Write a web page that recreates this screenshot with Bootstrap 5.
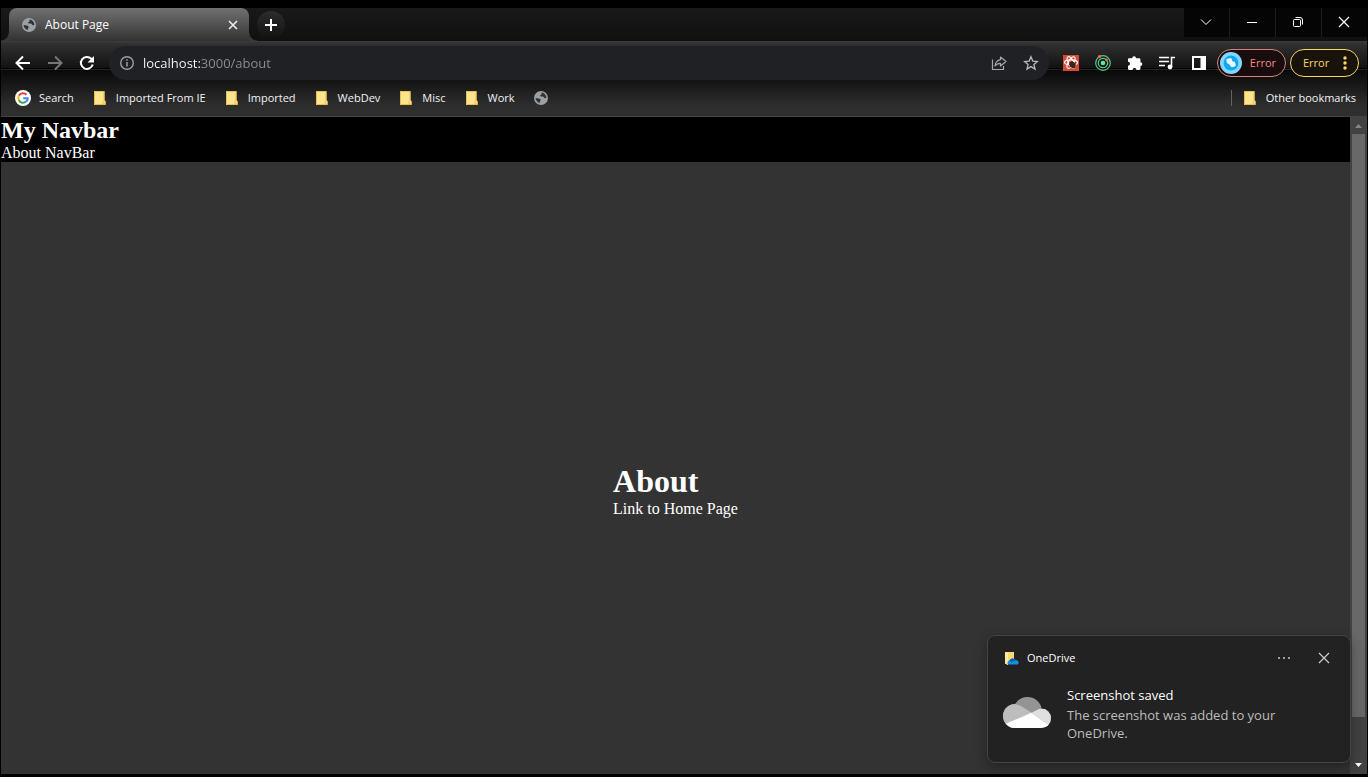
<!DOCTYPE html>
<html lang="en">
<head>
<meta charset="utf-8">
<meta name="viewport" content="width=device-width, initial-scale=1">
<title>About Page</title>
<link href="https://cdn.jsdelivr.net/npm/bootstrap@5.3.0/dist/css/bootstrap.min.css" rel="stylesheet">
<style>
  body { background: #000; color: #fff; font: 12px/16px "Open Sans", "Noto Sans", sans-serif; }
  svg { display: block; flex: none; }
  button, .pill { border: 0; background: none; color: inherit; padding: 0; }
  a { color: inherit; text-decoration: none; }
  .window { padding: 8px 1px 3px; }

  .tab-strip { background: linear-gradient(#191919, #101010); height: 33px; }
  .page-tab { width: 240px; height: 33px; margin-left: 8px; padding: 0 10px 0 12px; border-radius: 8px 8px 0 0; background: linear-gradient(#717171, #323232); position: relative; }
  .page-tab::before, .page-tab::after { content: ""; position: absolute; bottom: 0; width: 8px; height: 8px; }
  .page-tab::before { right: 100%; background: radial-gradient(circle at 0 0, transparent 7px, #3a3a3a 8px); }
  .page-tab::after { left: 100%; background: radial-gradient(circle at 100% 0, transparent 7px, #3a3a3a 8px); }
  .tab-add { width: 28px; height: 28px; border-radius: 50%; background: linear-gradient(#2c2c2c, #121212); margin: 3px 0 0 8px; }
  .win-btn { width: 45px; height: 29px; padding: 0 2px 1px 0; background: #050505; }
  .win-controls { gap: 1px; background: #1d1d1d; height: 29px; }

  .chrome-bars { background: linear-gradient(#3c3c3c 0, #303030 3px, #121212 27px, #000 27px, #000 28px, #252525 28px, #252525 29px, #090909 29px, #2d2d2d 64px, #2f2f2f 100%); border-bottom: 1px solid #444; }
  .tool-row { height: 44px; padding: 0 8px 0 6px; }
  .tool-btn { width: 32px; height: 32px; }
  .omnibox { height: 34px; margin: 0 6px; padding: 0 2px 0 10px; border-radius: 17px; background: #202124; }
  .address { font-size: 13px; line-height: 20px; border: 0; outline: 0; padding: 0; min-width: 0; color: transparent; background: linear-gradient(90deg, #fff 57px, #8c8f93 57px); -webkit-background-clip: text; background-clip: text; }
  .pill { height: 28px; width: 69px; border: 1px solid; border-radius: 14px; padding: 0 9px 0 2px; font-size: 11px; }
  .pill-red { color: #f28b82; border-color: #d9827c; background: #180c0d; margin-left: 2px; }
  .pill-yellow { color: #fdd663; background: #17130a; margin-left: 4px; padding-left: 12px; }
  .bookmarks { height: 31px; padding: 0 11px 5px 14px; gap: 18px; color: #f1f3f4; font-size: 11px; }
  .bookmark { gap: 8px; }
  .divider { width: 1px; height: 16px; background: #626262; margin-right: -8px; }

  .viewport { background: #333; min-height: 0; font: 16px/18px "Liberation Serif", "Times New Roman", serif; }
  .site { overflow: hidden; }
  .site-head { background: #000; }
  .site-head h1 { font-size: 24px; line-height: 27px; font-weight: 700; }
  .site-main { height: 100%; }
  .site-main h1 { font-size: 32px; line-height: 37px; font-weight: 700; }
  .scroll-rail { width: 17px; background: #424242; }
  .rail-arrow { width: 17px; height: 17px; }
  .rail-thumb { width: 13px; flex: 583 0 0; background: #686868; }
  .rail-rest { flex: 40 0 0; }

  .notice { position: absolute; right: 16px; bottom: 11px; width: 364px; height: 128px; padding: 14px 18px 0 15px; border: 1px solid #444; border-radius: 8px; background: #222; box-shadow: 0 4px 12px rgba(0,0,0,.35); font: 11px/16px "Open Sans", "Noto Sans", sans-serif; }
  .notice-body { gap: 16px; margin-top: 19px; }
  .notice-text { font-size: 13px; line-height: 18px; color: #bdbdbd; }
  .notice-text strong { font-weight: 400; color: #fff; line-height: 21px; }
</style>
</head>
<body>
<svg width="0" height="0" class="position-absolute" aria-hidden="true">
  <symbol id="globe" viewBox="0 0 16 16"><circle cx="8" cy="8" r="7" fill="#9aa0a6"/><path d="M8.500 2.500c2.800.3 4.700 2.400 4.900 5-.6.700-1.300.8-1.900.4-.7-.4-.9-1.300-1.700-1.400-.9-.1-1.700.3-2.400-.3-.6-.6-.1-1.200.6-1.400.9-.2.900-.9.500-1.300zM2.600 8l3 .4c1.100.2 1.800.6 2.100 1.300.3.800-.6.900-.7 1.700-.1.600-.1 1.100-.4 1.500-2.300-.6-3.900-2.500-4-4.900z" fill="#303134"/></symbol>
  <symbol id="folder" viewBox="0 0 16 16"><path d="M2 1h10.500v9.300l1 .7v4H2z" fill="#ffe48f"/><path d="M2.500 1.500H12v9l1.200.8v3.200H2.500zM11 14.500v-3l1-1" fill="none" stroke="#e9bf48"/></symbol>
</svg>
<div class="window vh-100 d-flex flex-column overflow-hidden">
  <div class="tab-strip d-flex">
    <div class="page-tab d-flex align-items-center">
      <svg width="16" height="16"><use href="#globe"/></svg>
      <span class="ms-2 flex-fill">About Page</span>
      <button type="button" aria-label="Close tab"><svg width="12" height="12" viewBox="0 0 12 12"><path d="M2 2l8 8M10 2l-8 8" stroke="#eee" stroke-width="1.600"/></svg></button>
    </div>
    <button type="button" class="tab-add d-flex align-items-center justify-content-center" aria-label="New tab"><svg width="14" height="14" viewBox="0 0 14 14"><path d="M7 1v12M1 7h12" stroke="#fff" stroke-width="2"/></svg></button>
    <div class="win-controls d-flex ms-auto">
      <button type="button" class="win-btn d-flex align-items-center justify-content-center" aria-label="Search tabs"><svg width="12" height="12" viewBox="0 0 12 12"><path d="M1 3.500l5 5 5-5" fill="none" stroke="#fff"/></svg></button>
      <button type="button" class="win-btn d-flex align-items-center justify-content-center" aria-label="Minimize"><svg width="12" height="12" viewBox="0 0 12 12"><path d="M1 6.500h10" stroke="#fff"/></svg></button>
      <button type="button" class="win-btn d-flex align-items-center justify-content-center" aria-label="Restore"><svg width="12" height="12" viewBox="0 0 12 12"><rect x="1.500" y="3.500" width="7" height="7" rx="1" fill="none" stroke="#fff"/><path d="M3.500 1.500H8a2.500 2.500 0 0 1 2.500 2.500v4.500" fill="none" stroke="#fff"/></svg></button>
      <button type="button" class="win-btn d-flex align-items-center justify-content-center" aria-label="Close window"><svg width="12" height="12" viewBox="0 0 12 12"><path d="M1 1l10 10M11 1L1 11" stroke="#fff" stroke-width="1.200"/></svg></button>
    </div>
  </div>

  <div class="chrome-bars">
    <div class="tool-row d-flex align-items-center">
      <button type="button" class="tool-btn d-flex align-items-center justify-content-center" aria-label="Back"><svg width="16" height="16" viewBox="0 0 16 16"><path d="M15 8H2.500M8 1.500L1.500 8 8 14.500" fill="none" stroke="#fff" stroke-width="2"/></svg></button>
      <button type="button" class="tool-btn d-flex align-items-center justify-content-center" aria-label="Forward"><svg width="16" height="16" viewBox="0 0 16 16"><path d="M1 8h12.500M8 1.500L14.500 8 8 14.500" fill="none" stroke="#777" stroke-width="2"/></svg></button>
      <button type="button" class="tool-btn d-flex align-items-center justify-content-center" aria-label="Reload"><svg width="16" height="16" viewBox="0 0 16 16"><path d="M13.700 9.500A6 6 0 1 1 12.300 3.800L13.500 5" fill="none" stroke="#fff" stroke-width="2"/><path d="M15 1v6.500H8.500z" fill="#fff"/></svg></button>
      <div class="omnibox d-flex align-items-center flex-fill">
        <svg width="16" height="16" viewBox="0 0 16 16"><circle cx="8" cy="8" r="6.300" fill="none" stroke="#9aa0a6" stroke-width="1.400"/><path d="M8 7v4.500M8 4.300v1.500" stroke="#9aa0a6" stroke-width="1.500"/></svg>
        <input class="address flex-fill ms-2" type="text" aria-label="Address" value="localhost:3000/about">
        <button type="button" class="tool-btn d-flex align-items-center justify-content-center" aria-label="Share"><svg width="16" height="16" viewBox="0 0 16 16"><path d="M1.500 4.500v10h11V11" fill="none" stroke="#a5a8ab" stroke-width="1.200"/><path d="M9.500 2l5.500 4.500-5.500 4.500V8.300C7 8.300 5.300 9.200 4 11c.4-3.500 2-5.800 5.500-6.400z" fill="none" stroke="#a5a8ab" stroke-width="1.200" stroke-linejoin="round"/></svg></button>
        <button type="button" class="tool-btn d-flex align-items-center justify-content-center" aria-label="Bookmark this page"><svg width="16" height="16" viewBox="0 0 16 16"><path d="M8 1.800l1.800 4.300 4.700.4-3.600 3 1.100 4.600L8 11.600l-4 2.500 1.100-4.600-3.600-3 4.700-.4z" fill="none" stroke="#b6b9bc" stroke-width="1.300"/></svg></button>
      </div>
      <button type="button" class="tool-btn d-flex align-items-center justify-content-center" aria-label="React developer tools"><svg width="16" height="16" viewBox="0 0 16 16"><path fill="#d64937" d="M0 0h16v16H0z"/><g fill="none" stroke="#fff" stroke-width="1.100"><ellipse cx="8" cy="7.500" rx="6.500" ry="2.600"/><ellipse cx="8" cy="7.500" rx="6.500" ry="2.600" transform="rotate(60 8 7.500)"/><ellipse cx="8" cy="7.500" rx="6.500" ry="2.600" transform="rotate(120 8 7.500)"/></g><ellipse cx="9.500" cy="10" rx="2.600" ry="3.800" transform="rotate(-35 9.500 10)" fill="#40201c"/><path d="M6 9l6 4M9 6.500l4 3M6.500 12.500l6-5" stroke="#40201c"/></svg></button>
      <button type="button" class="tool-btn d-flex align-items-center justify-content-center" aria-label="Orbit extension"><svg width="16" height="16" viewBox="0 0 16 16"><g fill="none" stroke="#4fc990" stroke-width="1.200"><circle cx="8" cy="8" r="7.300"/><circle cx="8" cy="8" r="4.700"/></g><circle cx="8" cy="8" r="2.300" fill="#64e5a5"/><circle cx="4.500" cy="1.700" r="1.600" fill="#f46a2a"/><circle cx="11.500" cy="5" r="1.400" fill="#f46a2a"/></svg></button>
      <button type="button" class="tool-btn d-flex align-items-center justify-content-center" aria-label="Extensions"><svg width="16" height="16" viewBox="0 0 16 16"><path d="M5.200 3.200a1.900 1.900 0 0 1 3.800 0h3.200c.7 0 1.200.5 1.200 1.200v2.800a1.900 1.900 0 0 1 0 3.800v2.800c0 .7-.5 1.200-1.200 1.200H9.500a2 2 0 0 0-4 0H2.200c-.7 0-1.200-.5-1.200-1.200v-3a2 2 0 0 0 0-4V4.400c0-.7.500-1.200 1.200-1.200z" fill="#fff"/></svg></button>
      <button type="button" class="tool-btn d-flex align-items-center justify-content-center" aria-label="Media controls"><svg width="16" height="16" viewBox="0 0 16 16"><path d="M0 2.500h10M0 6.500h10M0 10.500h6M12.500 12V2.500H16" fill="none" stroke="#fff" stroke-width="1.600"/><circle cx="11" cy="12" r="2.400" fill="#fff"/></svg></button>
      <button type="button" class="tool-btn d-flex align-items-center justify-content-center" aria-label="Side panel"><svg width="16" height="16" viewBox="0 0 16 16"><path d="M1 1h14v14H1zM3 3v10h6.500V3z" fill="#fff" fill-rule="evenodd"/></svg></button>
      <button type="button" class="pill pill-red d-flex align-items-center justify-content-between">
        <svg width="22" height="22" viewBox="0 0 22 22"><circle cx="11" cy="11" r="11" fill="#80d8ff"/><circle cx="11" cy="11" r="7.500" fill="#12a5f4"/><g fill="#e8f7ff"><rect x="6.500" y="6.500" width="5.500" height="5" rx="1.500" transform="rotate(-15 9 9)"/><rect x="10" y="10" width="5.500" height="5" rx="1.500" transform="rotate(-15 12.500 12.500)"/><path d="M11 6.500l3 5-4 2-2-3z"/></g></svg>
        <span>Error</span>
      </button>
      <button type="button" class="pill pill-yellow d-flex align-items-center justify-content-between">
        <span>Error</span>
        <svg width="8" height="16" viewBox="0 0 8 16" fill="#fdd663"><circle cx="4" cy="3" r="1.700"/><circle cx="4" cy="8" r="1.700"/><circle cx="4" cy="13" r="1.700"/></svg>
      </button>
    </div>
    <nav class="bookmarks d-flex align-items-center" aria-label="Bookmarks">
      <a href="#" class="bookmark d-flex align-items-center"><svg width="16" height="16" viewBox="0 0 16 16"><circle cx="8" cy="8" r="8" fill="#fff"/><g fill="none" stroke-width="2"><path d="M11.500 4.800A4.700 4.700 0 0 0 3.900 5.800" stroke="#ea4335"/><path d="M3.900 5.800a4.700 4.700 0 0 0 0 4.500" stroke="#fbbc05"/><path d="M3.900 10.300a4.700 4.700 0 0 0 7.200 1.300" stroke="#34a853"/><path d="M11.100 11.600A4.700 4.700 0 0 0 12.700 8.200H8.200" stroke="#4285f4"/></g></svg><span>Search</span></a>
      <a href="#" class="bookmark d-flex align-items-center"><svg width="16" height="16"><use href="#folder"/></svg><span>Imported From IE</span></a>
      <a href="#" class="bookmark d-flex align-items-center"><svg width="16" height="16"><use href="#folder"/></svg><span>Imported</span></a>
      <a href="#" class="bookmark d-flex align-items-center"><svg width="16" height="16"><use href="#folder"/></svg><span>WebDev</span></a>
      <a href="#" class="bookmark d-flex align-items-center"><svg width="16" height="16"><use href="#folder"/></svg><span>Misc</span></a>
      <a href="#" class="bookmark d-flex align-items-center"><svg width="16" height="16"><use href="#folder"/></svg><span>Work</span></a>
      <a href="#" aria-label="Untitled bookmark"><svg width="16" height="16"><use href="#globe"/></svg></a>
      <span class="divider ms-auto"></span>
      <a href="#" class="bookmark d-flex align-items-center"><svg width="16" height="16"><use href="#folder"/></svg><span>Other bookmarks</span></a>
    </nav>
  </div>

  <div class="viewport d-flex flex-fill position-relative">
    <div class="site flex-fill">
      <header class="site-head"><h1 class="m-0">My Navbar</h1><div>About NavBar</div></header>
      <main class="site-main d-flex align-items-center justify-content-center">
        <div><h1 class="m-0">About</h1><a href="#" class="d-block">Link to Home Page</a></div>
      </main>
    </div>
    <div class="scroll-rail d-flex flex-column align-items-center" aria-hidden="true">
      <svg class="rail-arrow" viewBox="0 0 17 17"><path d="M5 11l3.500-4 3.500 4z" fill="#868686"/></svg>
      <div class="rail-thumb"></div><div class="rail-rest"></div>
      <svg class="rail-arrow" viewBox="0 0 17 17"><path d="M5 6l3.500 4L12 6z" fill="#fff"/></svg>
    </div>
    <section class="notice" aria-label="OneDrive notification">
      <div class="d-flex align-items-center">
        <svg width="16" height="16" viewBox="0 0 16 16"><path d="M2 2h9v10H5v3L2 13z" fill="#f8d775"/><path d="M2 2l3 1v12l-3-1.500z" fill="#ffe9a6"/><path d="M5 14.500a2.500 2.500 0 0 1 1.500-4 3.500 3.500 0 0 1 6.300-.2 2.300 2.300 0 0 1 1.700 4.200z" fill="#1490df"/><path d="M6.500 10.500a3.500 3.500 0 0 1 6.300-.2L8 12z" fill="#0b5cad"/></svg>
        <span class="ms-2 flex-fill">OneDrive</span>
        <button type="button" class="me-4" aria-label="More options"><svg width="16" height="16" viewBox="0 0 16 16" fill="#c8c8c8"><circle cx="3" cy="8" r="1"/><circle cx="8" cy="8" r="1"/><circle cx="13" cy="8" r="1"/></svg></button>
        <button type="button" aria-label="Dismiss"><svg width="16" height="16" viewBox="0 0 16 16"><path d="M3 3l10 10M13 3L3 13" stroke="#ccc" stroke-width="1.200"/></svg></button>
      </div>
      <div class="notice-body d-flex">
        <svg class="mt-2" width="48" height="36" viewBox="0 0 48 36"><defs><clipPath id="cloud"><circle cx="12" cy="23" r="12"/><circle cx="24.500" cy="18.500" r="14.500"/><circle cx="38.300" cy="25.300" r="9.700"/><path d="M12 23h26v12H12z"/></clipPath></defs><g clip-path="url(#cloud)"><path d="M0 0h48v36H0z" fill="#949494"/><path d="M0 11h12l6 2 11 7-14 16H0z" fill="#bdbdbd"/><path d="M28 20l8-4 12-1v21L26 20z" fill="#dedede"/><path d="M0 32l28-12 20 14v2H0z" fill="#fff"/></g></svg>
        <p class="notice-text m-0"><strong class="d-block">Screenshot saved</strong>The screenshot was added to your OneDrive.</p>
      </div>
    </section>
  </div>
</div>
<script src="https://cdn.jsdelivr.net/npm/bootstrap@5.3.0/dist/js/bootstrap.bundle.min.js"></script>
</body>
</html>
